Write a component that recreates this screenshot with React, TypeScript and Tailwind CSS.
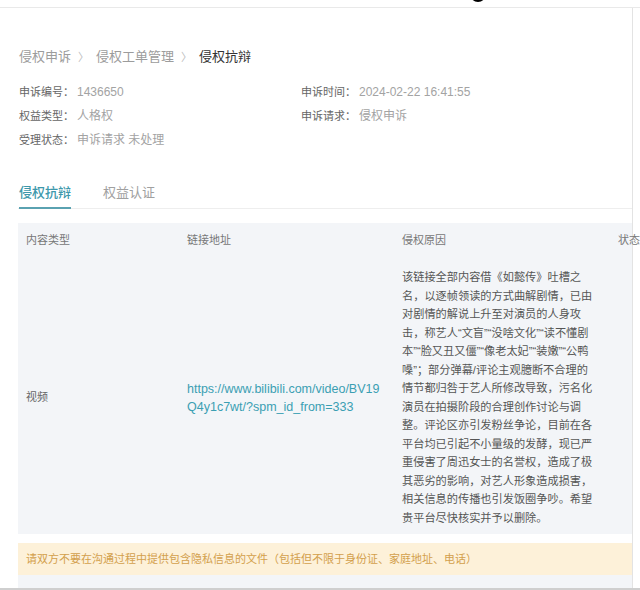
import { ReactElement } from "react";

const reasonLines: string[] = [
    "该链接全部内容借《如懿传》吐槽之",
    "名，以逐帧领读的方式曲解剧情，已由",
    "对剧情的解说上升至对演员的人身攻",
    "击，称艺人“文盲”“没啥文化”“读不懂剧",
    "本”“脸又丑又僵”“像老太妃”“装嫩”“公鸭",
    "嗓”；部分弹幕/评论主观臆断不合理的",
    "情节都归咎于艺人所修改导致，污名化",
    "演员在拍摄阶段的合理创作讨论与调",
    "整。评论区亦引发粉丝争论，目前在各",
    "平台均已引起不小量级的发酵，现已严",
    "重侵害了周迅女士的名誉权，造成了极",
    "其恶劣的影响，对艺人形象造成损害，",
    "相关信息的传播也引发饭圈争吵。希望",
    "贵平台尽快核实并予以删除。",
];

// 상단 정보 항목
function InfoItem({ label, value }: { label: string; value: string }): ReactElement {
    return (
        <div className="flex items-center h-6">
            <span className="text-[11px] text-[#666]">{label}：</span>
            <span className="ml-[3px] text-[12px] text-[#a3a3a3]">{value}</span>
        </div>
    );
}

function App(): ReactElement {
    return (
        <div className="w-[640px] h-[590px] bg-white overflow-hidden font-['Liberation_Sans','Noto_Sans_CJK_SC',sans-serif]">
            {/* 상단 바 */}
            <div className="relative h-2 border-b border-[#e9e9e9]">
                <div className="absolute left-[470px] -top-[14px] w-4 h-4 rounded-full bg-black" />
            </div>

            <div className="flex flex-col w-[633px] h-[580px] border-r border-[#e3e3e3] pl-[18px]">
                {/* breadcrumb */}
                <div className="flex items-center h-5 mt-[39px] text-[13px] pl-px">
                    <span className="text-[#9c9c9c]">侵权申诉</span>
                    <span className="mx-[7px] text-[#bbb] text-[11px]">〉</span>
                    <span className="text-[#9c9c9c]">侵权工单管理</span>
                    <span className="mx-[7px] text-[#bbb] text-[11px]">〉</span>
                    <span className="text-[#333]">侵权抗辩</span>
                </div>

                {/* 기본 정보 */}
                <div className="grid grid-cols-[282px_1fr] mt-[13px] pl-px">
                    <InfoItem label="申诉编号" value="1436650" />
                    <InfoItem label="申诉时间" value="2024-02-22 16:41:55" />
                    <InfoItem label="权益类型" value="人格权" />
                    <InfoItem label="申诉请求" value="侵权申诉" />
                    <InfoItem label="受理状态" value="申诉请求 未处理" />
                </div>

                {/* 탭 */}
                <div className="flex items-end mt-[31px] border-b border-[#eeeeee] pl-px">
                    <div className="flex flex-col">
                        <span className="text-[13px] leading-5 text-[#3d98ab] font-medium">侵权抗辩</span>
                        <div className="h-[2px] mt-1 -mb-px bg-[#5aa2b1]" />
                    </div>
                    <span className="ml-[32px] mb-[5px] text-[13px] leading-5 text-[#a0a0a0]">权益认证</span>
                </div>

                {/* 테이블 */}
                <div className="mt-[14px] bg-[#f3f5f8] px-2">
                    <div className="grid grid-cols-[161px_215px_216px_1fr] h-[34px] items-center text-[11px] text-[#777]">
                        <span>内容类型</span>
                        <span>链接地址</span>
                        <span>侵权原因</span>
                        <span className="whitespace-nowrap">状态</span>
                    </div>
                    <div className="grid grid-cols-[161px_215px_216px_1fr] items-center pt-[11px] pb-[7px]">
                        <span className="text-[11px] text-[#666]">视频</span>
                        <div className="text-[12.5px] leading-[18px] text-[#3b9fb3] whitespace-nowrap">
                            <div>https://www.bilibili.com/video/BV19</div>
                            <div>Q4y1c7wt/?spm_id_from=333</div>
                        </div>
                        <div className="text-[11.2px] leading-[18.5px] text-[#555] whitespace-nowrap">
                            {reasonLines.map((line, i) => (
                                <div key={i}>{line}</div>
                            ))}
                        </div>
                        <span />
                    </div>
                </div>

                {/* 안내 */}
                <div className="mt-[9px] h-8 flex items-center bg-[#fdf1d9] px-2 text-[11px] text-[#d3a04c]">
                    请双方不要在沟通过程中提供包含隐私信息的文件（包括但不限于身份证、家庭地址、电话）
                </div>
                <div className="flex-1 bg-[#f3f5f8]" />
            </div>
            <div className="h-[2px] bg-[#cfcfcf]" />
        </div>
    );
}

export default App;
